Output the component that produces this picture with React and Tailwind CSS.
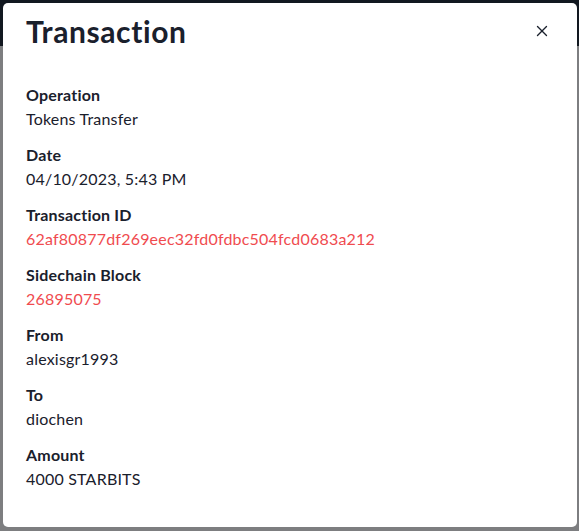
import { X } from 'lucide-react';

const rows = [
  { label: 'Operation', value: 'Tokens Transfer' },
  { label: 'Date', value: '04/10/2023, 5:43 PM' },
  { label: 'Transaction ID', value: '62af80877df269eec32fd0fdbc504fcd0683a212', link: true },
  { label: 'Sidechain Block', value: '26895075', link: true },
  { label: 'From', value: 'alexisgr1993' },
  { label: 'To', value: 'diochen' },
  { label: 'Amount', value: '4000 STARBITS' },
];

export default function App() {
  return (
    <div className="relative w-[579px] h-[531px] overflow-hidden bg-[#7d7e80]" style={{ fontFamily: 'Lato, "Noto Sans", sans-serif' }}>
      <div className="absolute inset-x-0 top-0 h-[46px] bg-[#121820]" />
      <div className="absolute left-[3px] top-[3px] w-[574px] h-[524px] bg-white rounded-[5px] text-[#1a202c]">
        <div className="flex items-center justify-between pl-[23px] pr-[26px] pt-[8px] h-[48px]">
          <h2 className="text-[30px] font-bold leading-[40px] tracking-[0.6px]">Transaction</h2>
          <button className="text-[#1a202c]">
            <X size={18} strokeWidth={1.8} />
          </button>
        </div>
        <div className="pl-[23px] pt-[32px] flex flex-col gap-[12px] tracking-[0.2px]">
          {rows.map((r) => (
            <div key={r.label}>
              <div className="text-[16px] font-bold leading-[24px]">{r.label}</div>
              <div className={`text-[16px] leading-[24px] ${r.link ? 'text-[#f04b4f]' : ''}`}>{r.value}</div>
            </div>
          ))}
        </div>
      </div>
    </div>
  );
}
